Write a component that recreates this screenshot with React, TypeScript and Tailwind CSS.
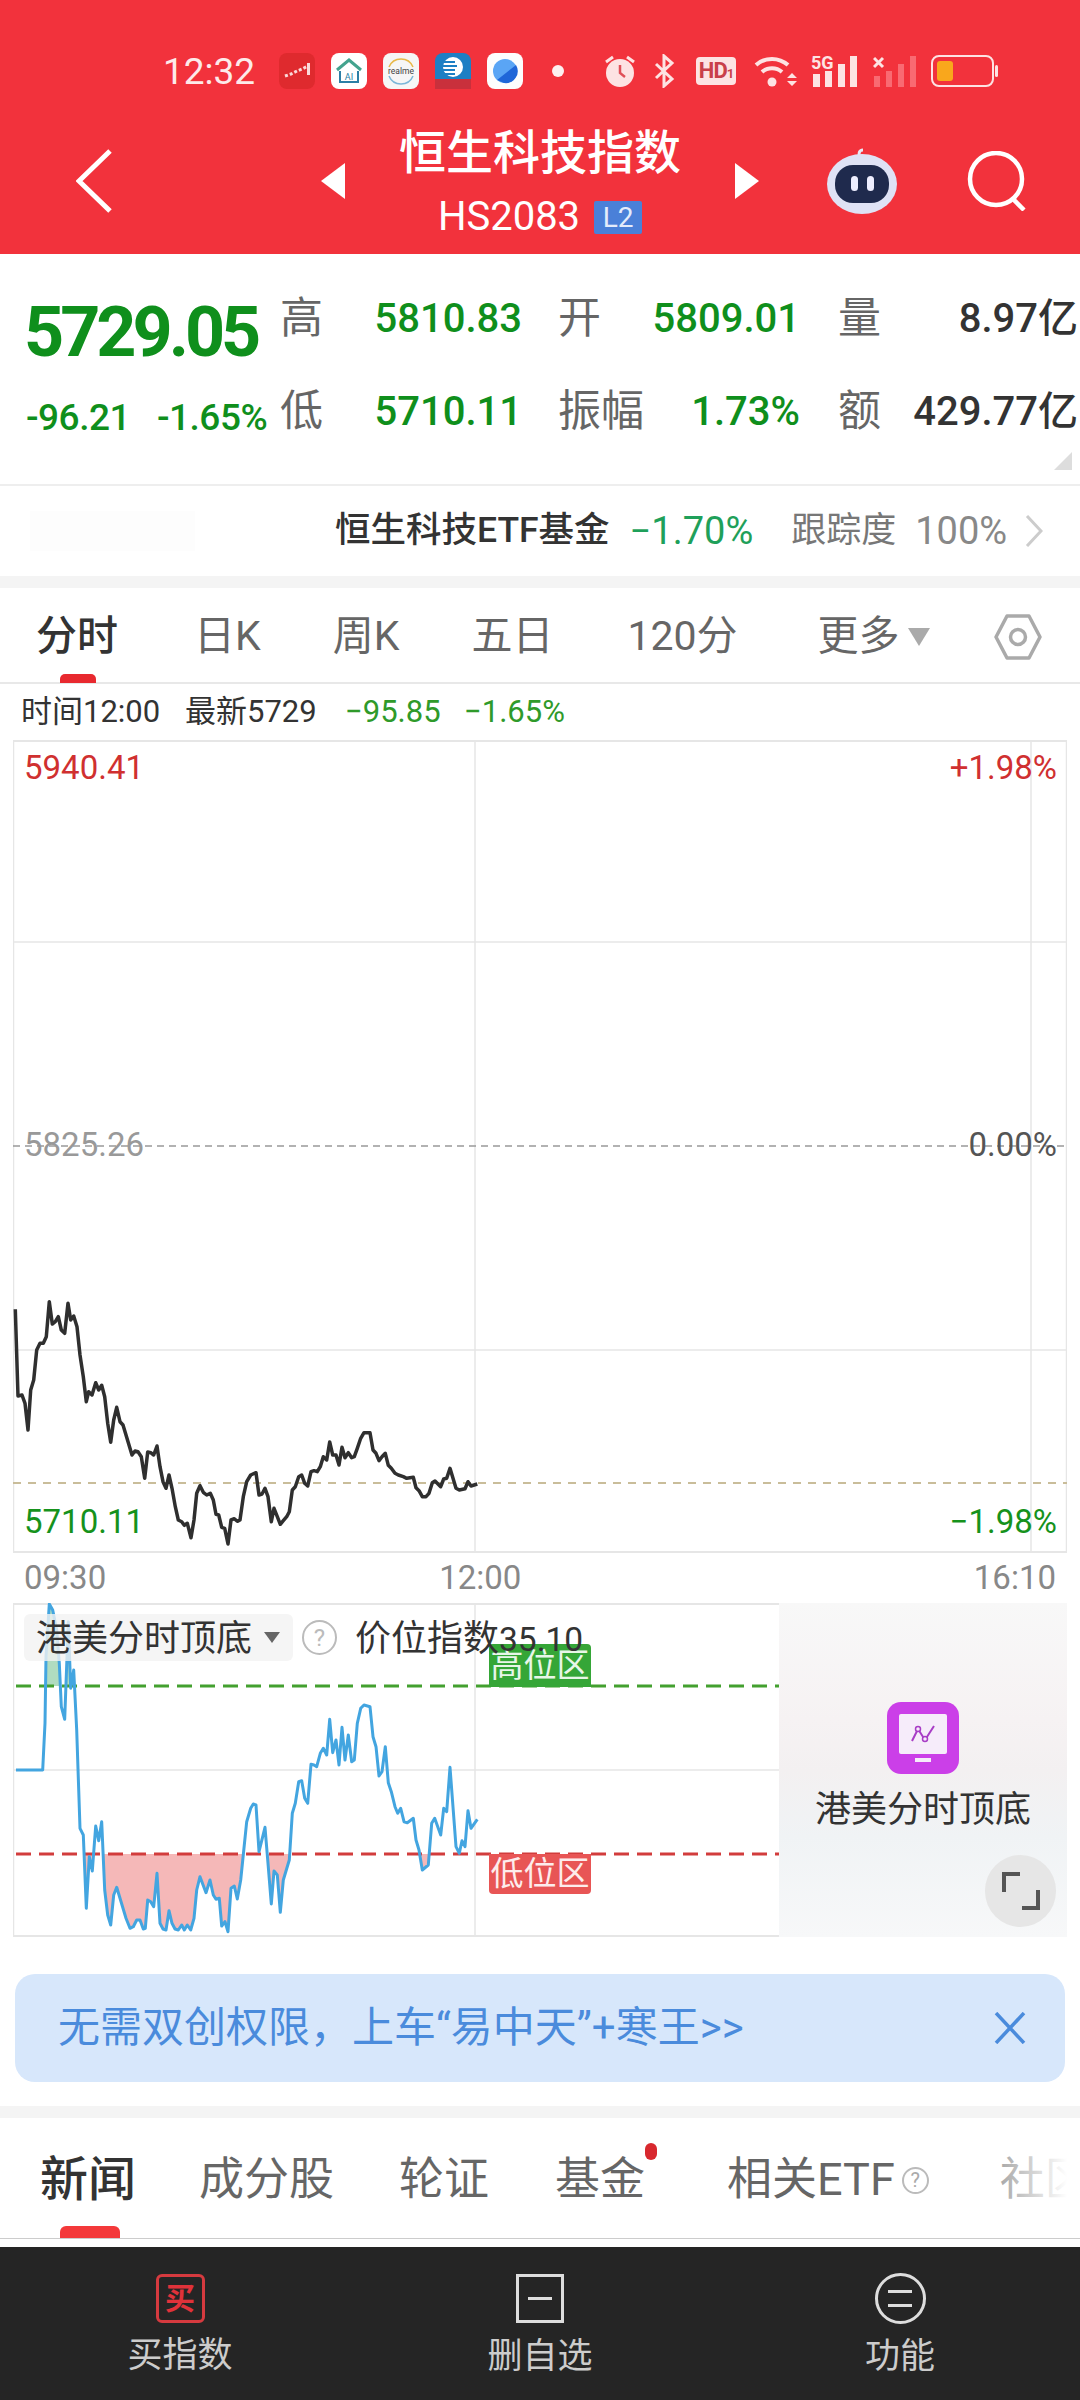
import React from "react";

// traced from the reference: [x, y] in page pixels * 3, offset by the crop origin
const priceRaw = [46,88,54,348,66,345,75,370,84,450,92,330,101,300,110,210,120,190,130,190,139,170,148,65,157,132,166,125,175,110,184,150,194,160,204,70,212,120,221,108,231,140,240,225,250,290,259,365,266,335,276,345,287,308,296,330,305,316,314,350,323,430,332,487,341,420,350,382,360,425,369,435,378,465,396,525,405,513,414,515,424,530,434,595,443,516,452,518,461,525,471,498,480,560,489,605,498,625,507,585,516,625,526,680,535,720,545,725,553,736,562,730,573,773,582,720,590,640,600,617,610,637,620,645,631,640,640,660,648,703,656,705,665,742,674,745,684,792,693,720,703,716,712,724,720,720,730,650,740,605,752,585,768,578,777,645,786,642,795,625,804,650,814,725,822,685,832,710,841,733,850,722,860,710,868,695,877,630,886,620,896,590,905,585,914,610,923,618,933,575,942,572,952,575,961,560,970,530,980,540,989,486,998,525,1008,525,1017,555,1026,502,1035,533,1045,518,1055,533,1063,530,1072,505,1082,475,1092,458,1110,458,1119,510,1128,520,1137,542,1146,530,1156,520,1165,556,1174,565,1185,580,1195,585,1210,590,1220,595,1240,592,1248,623,1257,632,1267,650,1278,650,1287,640,1297,608,1305,603,1322,620,1331,597,1340,595,1350,565,1368,625,1378,630,1395,626,1404,605,1413,618,1432,612];

const indexRaw = [48,540,128,540,135,400,138,200,148,42,158,60,170,120,178,220,184,350,194,388,205,95,212,295,221,240,230,420,240,715,250,735,259,955,268,800,277,843,287,708,296,752,305,695,314,900,323,975,332,1005,341,915,350,892,360,925,378,985,390,1015,400,1010,410,990,420,990,430,1017,436,1015,443,930,452,935,461,950,471,850,480,1000,489,1017,498,1020,507,962,516,1000,525,1017,535,1020,545,1005,553,1020,562,1005,572,1020,582,985,590,900,600,860,618,908,630,870,640,915,648,928,658,925,665,1008,675,995,684,1025,693,895,703,888,712,927,722,870,740,695,752,655,760,642,768,645,777,785,795,712,804,820,814,942,822,843,832,855,841,967,850,870,868,810,877,670,886,640,896,575,905,572,914,625,923,640,933,523,942,525,950,530,961,490,970,475,980,495,989,388,998,488,1008,450,1017,525,1026,412,1035,510,1045,435,1055,515,1063,510,1072,400,1082,355,1092,345,1110,350,1119,440,1128,470,1137,558,1146,545,1156,470,1165,578,1174,605,1185,650,1193,670,1202,655,1212,695,1222,698,1240,685,1248,750,1257,780,1267,840,1285,825,1295,700,1304,685,1322,735,1331,655,1340,665,1350,532,1368,770,1378,790,1386,752,1395,770,1404,662,1413,715,1432,688];

const toPoints = (raw: number[], dy: number) => {
  const out: string[] = [];
  for (let i = 0; i < raw.length; i += 2) {
    out.push(`${(raw[i] / 3 - 13).toFixed(1)},${(raw[i + 1] / 3 + dy).toFixed(1)}`);
  }
  return out.join(" ");
};

const pricePoints = toPoints(priceRaw, 1280 - 740);
const indexPoints = toPoints(indexRaw, 1590 - 1603);

const StatusIcons = () => (
  <div className="flex items-center h-[36px] pl-[163px]">
    <span className="text-[37px] leading-none text-[#fdeaea] w-[116px]">12:32</span>
    <svg width="36" height="36" viewBox="0 0 36 36" className="mr-[16px]">
      <rect width="36" height="36" rx="8" fill="#df2a2e" />
      <path d="M6 23l6-2 6-3 5-2 6-3" stroke="#fbd9d9" strokeWidth="3" strokeDasharray="3 2" fill="none" />
      <rect x="28" y="10" width="3" height="12" fill="#fbd9d9" />
    </svg>
    <svg width="36" height="36" viewBox="0 0 36 36" className="mr-[16px]">
      <rect width="36" height="36" rx="8" fill="#fff" />
      <path d="M6 17L18 7l12 10" stroke="#43a38e" strokeWidth="3" fill="none" />
      <path d="M9 18v11h18V18" stroke="#2c7fa6" strokeWidth="2" fill="none" />
      <text x="18" y="27" textAnchor="middle" fontSize="9" fill="#2c7fa6">AI</text>
    </svg>
    <svg width="36" height="36" viewBox="0 0 36 36" className="mr-[16px]">
      <rect width="36" height="36" rx="8" fill="#f6f6f6" />
      <path d="M6 14a13 13 0 0 1 24 0" stroke="#e8b94a" strokeWidth="1.5" fill="none" />
      <path d="M6 23a13 13 0 0 0 24 0" stroke="#7bb6d8" strokeWidth="1.5" fill="none" />
      <text x="18" y="21" textAnchor="middle" fontSize="8.5" fill="#444">realme</text>
    </svg>
    <svg width="36" height="36" viewBox="0 0 36 36" className="mr-[16px]">
      <rect width="36" height="36" rx="8" fill="#1d7fc4" />
      <circle cx="18" cy="14" r="10" fill="#fff" />
      <path d="M8 9h12M8 13h14M8 17h12M10 21h10" stroke="#1d7fc4" strokeWidth="2" />
      <rect y="26" width="36" height="10" fill="#c9303c" />
    </svg>
    <svg width="36" height="36" viewBox="0 0 36 36" className="mr-[29px]">
      <rect width="36" height="36" rx="8" fill="#fdfdfd" />
      <circle cx="18" cy="18" r="12" fill="#5aa5f5" />
      <path d="M10 27L29 12a12 12 0 0 1-12 18z" fill="#1f66d8" />
    </svg>
    <span className="w-[12px] h-[12px] rounded-full bg-[#fdf0f0] mr-[40px]" />
    <svg width="32" height="34" viewBox="0 0 32 34" className="mr-[18px]">
      <circle cx="16" cy="19" r="14" fill="#fde3e3" />
      <path d="M16 11v8l5 4" stroke="#e05058" strokeWidth="2.5" fill="none" />
      <path d="M2 8l7-5M30 8l-7-5" stroke="#fde3e3" strokeWidth="3" />
    </svg>
    <svg width="21" height="34" viewBox="0 0 21 34" className="mr-[21px]">
      <path d="M2 10l16 15-8 7V2l8 7L2 24" stroke="#fde3e3" strokeWidth="3" fill="none" />
    </svg>
    <div className="w-[40px] h-[28px] bg-[#fde3e3] rounded-[4px] text-[#c9404a] text-[22px] leading-[28px] font-bold text-center mr-[18px] tracking-[-1px]">HD<span className="text-[13px]">1</span></div>
    <svg width="44" height="34" viewBox="0 0 44 34" className="mr-[13px]">
      <path d="M2 11a24 24 0 0 1 32 0M8 18a15 15 0 0 1 20 0" stroke="#fde3e3" strokeWidth="4" fill="none" />
      <circle cx="18" cy="28" r="4.5" fill="#fde3e3" />
      <path d="M33 24l5-5 5 5zM33 27l5 5 5-5z" fill="#fde3e3" />
    </svg>
    <svg width="47" height="38" viewBox="0 -4 47 38" className="mr-[15px] -mt-[4px]">
      <text x="0" y="15" fontSize="18" fontWeight="700" fill="#fde3e3">5G</text>
      <rect x="2" y="20" width="7" height="13" fill="#fde3e3" />
      <rect x="14" y="17" width="7" height="16" fill="#fde3e3" />
      <rect x="27" y="10" width="7" height="23" fill="#fde3e3" />
      <rect x="39" y="2" width="7" height="31" fill="#fde3e3" />
    </svg>
    <svg width="43" height="34" viewBox="0 0 43 34" className="mr-[15px]">
      <path d="M1 4l9 9M10 4l-9 9" stroke="#fde3e3" strokeWidth="3" />
      <rect x="1" y="22" width="6" height="11" fill="#f96a72" />
      <rect x="13" y="17" width="6" height="16" fill="#f96a72" />
      <rect x="25" y="10" width="6" height="23" fill="#f96a72" />
      <rect x="37" y="2" width="6" height="31" fill="#f96a72" />
    </svg>
    <svg width="68" height="32" viewBox="0 0 68 32">
      <rect x="1" y="1" width="61" height="30" rx="7" stroke="#fde3e3" strokeWidth="2" fill="none" />
      <rect x="6" y="6" width="16" height="20" rx="3" fill="#f9a71c" />
      <rect x="64" y="10" width="3" height="12" rx="1.5" fill="#fde3e3" />
    </svg>
  </div>
);

const Header = () => (
  <div className="bg-[#f2323c] h-[254px] pt-[53px]">
    <StatusIcons />
    <div className="flex items-center h-[112px] mt-[36px] text-white">
      <svg width="36" height="64" viewBox="0 0 36 64" className="ml-[76px] mr-[209px]">
        <path d="M34 2L3 32l31 30" stroke="#fff" strokeWidth="5" fill="none" />
      </svg>
      <div className="w-0 h-0 border-y-[18px] border-y-transparent border-r-[24px] border-r-white" />
      <div className="w-[390px] h-[112px] flex flex-col items-center">
        <div className="text-[47px] leading-[56px] font-medium">恒生科技指数</div>
        <div className="flex items-center h-[40px] mt-[16px] gap-[14px]">
          <span className="text-[40px] leading-none">HS2083</span>
          <span className="w-[48px] h-[33px] bg-[#4a80d8] text-[#e4ecfb] text-[28px] leading-[33px] text-center rounded-[2px]">L2</span>
        </div>
      </div>
      <div className="w-0 h-0 border-y-[18px] border-y-transparent border-l-[24px] border-l-white" />
      <svg width="72" height="66" viewBox="0 0 72 66" className="ml-[67px] mr-[69px]">
        <path d="M34 10c-2-4-1-8 3-8" stroke="#e8e8f5" strokeWidth="3" fill="none" />
        <ellipse cx="36" cy="36" rx="35" ry="30" fill="#dfe2f5" />
        <rect x="9" y="17" width="54" height="38" rx="18" fill="#1f2a4d" />
        <rect x="25" y="28" width="7" height="15" rx="3.5" fill="#eef" />
        <rect x="41" y="28" width="7" height="15" rx="3.5" fill="#eef" />
      </svg>
      <svg width="60" height="60" viewBox="0 0 60 60">
        <circle cx="29" cy="28" r="26" stroke="#fff" strokeWidth="4.5" fill="none" />
        <path d="M45 47l12 12" stroke="#fff" strokeWidth="4.5" />
      </svg>
    </div>
  </div>
);

const Pair = ({ label, top, bottom, widthCls, topCls = "text-[#0f8f1c]", bottomCls = "text-[#0f8f1c]" }: { label: [string, string]; top: string; bottom: string; widthCls: string; topCls?: string; bottomCls?: string }) => (
  <div className={`${widthCls} flex flex-col`}>
    <div className="flex justify-between items-center h-[93px]">
      <span className="text-[43px] text-[#666] leading-none">{label[0]}</span>
      <span className={`text-[40px] leading-none font-medium ${topCls}`}>{top}</span>
    </div>
    <div className="flex justify-between items-center h-[93px]">
      <span className="text-[43px] text-[#666] leading-none">{label[1]}</span>
      <span className={`text-[40px] leading-none font-medium ${bottomCls}`}>{bottom}</span>
    </div>
  </div>
);

const Quote = () => (
  <div className="relative h-[232px] flex pt-[18px] border-b-2 border-[#eee]">
    <div className="w-[280px] pl-[24px] flex flex-col text-[#0f8f1c]">
      <div className="h-[93px] pt-[26px] flex items-center text-[70px] font-bold leading-none tracking-[-4px]">5729.05</div>
      <div className="h-[93px] pt-[11px] pl-[2px] flex items-center text-[37px] font-medium leading-none tracking-[-0.5px] gap-[27px]">
        <span>-96.21</span>
        <span>-1.65%</span>
      </div>
    </div>
    <Pair label={["高", "低"]} top="5810.83" bottom="5710.11" widthCls="w-[242px] mr-[36px]" />
    <Pair label={["开", "振幅"]} top="5809.01" bottom="1.73%" widthCls="w-[242px] mr-[38px]" />
    <Pair label={["量", "额"]} top="8.97亿" bottom="429.77亿" widthCls="w-[240px]" topCls="text-[#333]" bottomCls="text-[#333]" />
    <div className="absolute right-[8px] bottom-[14px] w-0 h-0 border-b-[18px] border-b-[#ddd] border-l-[18px] border-l-transparent" />
  </div>
);

const EtfRow = () => (
  <div className="h-[90px] flex items-center pl-[30px]">
    <div className="w-[165px] h-[40px] bg-[#fdfdfd] mr-[140px]" />
    <span className="text-[35.5px] text-[#333] font-medium mr-[20px] whitespace-nowrap">恒生科技ETF基金</span>
    <span className="text-[38px] text-[#1fa05a] mr-[38px]">−1.70%</span>
    <span className="text-[35px] text-[#777] mr-[19px]">跟踪度</span>
    <span className="text-[38px] text-[#888] mr-[18px]">100%</span>
    <svg width="18" height="32" viewBox="0 0 18 32">
      <path d="M2 1l14 15L2 31" stroke="#ccc" strokeWidth="3" fill="none" />
    </svg>
  </div>
);

const KTabs = () => (
  <div className="relative h-[96px] border-b-2 border-[#e8e8e8] flex items-center text-[41px] text-[#666] pt-[4px]">
    <span className="ml-[36px] text-[#333] font-medium">分时</span>
    <span className="ml-[76px]">日K</span>
    <span className="ml-[72px]">周K</span>
    <span className="ml-[72px]">五日</span>
    <span className="ml-[74px]">120分</span>
    <span className="ml-[80px]">更多</span>
    <div className="ml-[8px] w-0 h-0 border-t-[18px] border-t-[#aaa] border-x-[11px] border-x-transparent" />
    <svg width="48" height="46" viewBox="0 0 48 46" className="ml-[64px]">
      <path d="M13 2h22l11 21-11 21H13L2 23z" stroke="#aaa" strokeWidth="3.5" fill="none" strokeLinejoin="round" />
      <circle cx="24" cy="23" r="7.5" stroke="#aaa" strokeWidth="3.5" fill="none" />
    </svg>
    <div className="absolute left-[60px] -bottom-[1px] w-[36px] h-[9px] bg-[#e8292f] rounded-t-[5px]" />
  </div>
);

const InfoRow = () => (
  <div className="h-[56px] flex items-center pl-[21px] text-[31px] text-[#333]">
    <span className="w-[164px]">时间12:00</span>
    <span className="w-[160px]">最新5729</span>
    <span className="w-[119px] text-[#2f9a2a]">−95.85</span>
    <span className="text-[#2f9a2a]">−1.65%</span>
  </div>
);

const PriceChart = () => (
  <div className="relative mx-[13px] h-[813px]">
    <svg width="1054" height="813" viewBox="0 0 1054 813" className="block">
      <g stroke="#e6e6e6" strokeWidth="1.5">
        <line x1="0" y1="1" x2="1054" y2="1" strokeWidth="2" />
        <line x1="0" y1="202" x2="1054" y2="202" />
        <line x1="0" y1="610" x2="1054" y2="610" />
        <line x1="0" y1="812" x2="1054" y2="812" strokeWidth="2" />
        <line x1="0.5" y1="0" x2="0.5" y2="813" />
        <line x1="462" y1="0" x2="462" y2="813" />
        <line x1="1018" y1="0" x2="1018" y2="813" />
        <line x1="1053.5" y1="0" x2="1053.5" y2="813" />
      </g>
      <line x1="0" y1="406" x2="1054" y2="406" stroke="#999" strokeWidth="1.5" strokeDasharray="7 5" />
      <line x1="0" y1="743" x2="1054" y2="743" stroke="#c9bd9a" strokeWidth="2" strokeDasharray="8 7" />
      <polyline points={pricePoints} fill="none" stroke="#2f2f2f" strokeWidth="3.5" strokeLinejoin="round" />
    </svg>
    <span className="absolute left-[11px] top-[8px] text-[33px] leading-[40px] text-[#d03030]">5940.41</span>
    <span className="absolute right-[10px] top-[8px] text-[33px] leading-[40px] text-[#d03030]">+1.98%</span>
    <span className="absolute left-[11px] top-[385px] text-[33px] leading-[40px] text-[#999]">5825.26</span>
    <span className="absolute right-[10px] top-[385px] text-[33px] leading-[40px] text-[#555]">0.00%</span>
    <span className="absolute left-[11px] top-[762px] text-[33px] leading-[40px] text-[#16921c]">5710.11</span>
    <span className="absolute right-[10px] top-[762px] text-[33px] leading-[40px] text-[#16921c]">−1.98%</span>
  </div>
);

const TimeAxis = () => (
  <div className="h-[50px] flex items-center px-[24px] text-[33px] text-[#888]">
    <span>09:30</span>
    <span className="ml-[333px]">12:00</span>
    <span className="ml-auto">16:10</span>
  </div>
);

const IndexChart = () => (
  <div className="relative mx-[13px] h-[334px] flex">
    <svg width="766" height="334" viewBox="0 0 766 334" className="block">
      <defs>
        <clipPath id="below">
          <rect x="0" y="251" width="766" height="90" />
        </clipPath>
        <clipPath id="above">
          <rect x="0" y="0" width="766" height="83" />
        </clipPath>
      </defs>
      <g stroke="#e6e6e6" strokeWidth="1.5">
        <line x1="0" y1="1" x2="766" y2="1" strokeWidth="2" />
        <line x1="0" y1="167" x2="766" y2="167" />
        <line x1="0" y1="333" x2="766" y2="333" strokeWidth="2" />
        <line x1="0.5" y1="0" x2="0.5" y2="334" />
        <line x1="462" y1="0" x2="462" y2="334" />
      </g>
      <polygon points={`${indexPoints} 464,251 3,251`} fill="#f5b8b8" clipPath="url(#below)" />
      <polygon points={`${indexPoints} 464,83 3,83`} fill="#b0dcc0" clipPath="url(#above)" />
      <line x1="3" y1="83" x2="766" y2="83" stroke="#43a02f" strokeWidth="3" strokeDasharray="15 8" />
      <line x1="3" y1="251" x2="766" y2="251" stroke="#d23c3c" strokeWidth="3" strokeDasharray="15 8" />
      <polyline points={indexPoints} fill="none" stroke="#43a5e0" strokeWidth="3" strokeLinejoin="round" />
    </svg>
    <div className="relative flex-1 flex flex-col items-center bg-[linear-gradient(180deg,#f8f8f8_0%,#f6f2f3_35%,#f3f0f1_50%,#f0f3f5_70%,#f7f8f9_100%)] pt-[99px]">
      <div className="w-[72px] h-[72px] rounded-[14px] bg-[#cb3fe8] flex flex-col items-center pt-[12px]">
        <div className="w-[48px] h-[40px] rounded-[2px] bg-[#f6ecfa] flex items-center justify-center">
          <svg width="26" height="20" viewBox="0 0 26 20">
            <path d="M2 17L8 5l7 11 9-14" stroke="#a83dc6" strokeWidth="2" fill="none" />
            <circle cx="8" cy="5" r="2.5" fill="#f6ecfa" stroke="#a83dc6" strokeWidth="1.5" />
            <circle cx="15" cy="15" r="2.5" fill="#f6ecfa" stroke="#a83dc6" strokeWidth="1.5" />
          </svg>
        </div>
        <div className="w-[16px] h-[4px] bg-[#f6ecfa] mt-[4px]" />
      </div>
      <div className="text-[36px] leading-[44px] text-[#333] mt-[14px]">港美分时顶底</div>
      <div className="absolute right-[11px] bottom-[10px] w-[71px] h-[72px] rounded-full bg-[#e6e6e6] flex items-center justify-center">
        <svg width="38" height="38" viewBox="0 0 38 38">
          <path d="M18 2H2v18M20 36h16V18" stroke="#555" strokeWidth="4" fill="none" />
        </svg>
      </div>
    </div>
    <div className="absolute left-[11px] top-[11px] w-[269px] h-[47px] rounded-[6px] bg-[#f2f2f2]/80 flex items-center pl-[12px] pt-[3px]">
      <span className="text-[36px] leading-none text-[#333]">港美分时顶底</span>
      <div className="ml-[12px] -mt-[3px] w-0 h-0 border-t-[11px] border-t-[#666] border-x-[8px] border-x-transparent" />
    </div>
    <div className="absolute left-[289px] top-[17px] w-[35px] h-[35px] rounded-full border-2 border-[#bbb] flex items-center justify-center text-[24px] leading-none text-[#bbb]">?</div>
    <div className="absolute left-[476px] top-[41px] w-[102px] h-[43px] bg-[#35a637] rounded-t-[4px] text-[33px] leading-[43px] text-center text-[#e8f6e8]">高位区</div>
    <span className="absolute left-[342px] top-[14px] text-[36px] leading-[44px] text-[#333] whitespace-nowrap">价位指数<span className="text-[33.5px]">35.10</span></span>
    <div className="absolute left-[476px] top-[251px] w-[102px] h-[40px] bg-[#e85555] rounded-b-[4px] text-[33px] leading-[40px] text-center text-[#fdecec]">低位区</div>
  </div>
);

const Banner = () => (
  <div className="mx-[15px] mt-[37px] h-[108px] rounded-[20px] bg-[#d7e7fb] flex items-center justify-between pl-[43px] pr-[39px]">
    <span className="text-[42px] leading-none text-[#4a8bdc] whitespace-nowrap">无需双创权限，上车“易中天”+寒王&gt;&gt;</span>
    <svg width="32" height="32" viewBox="0 0 32 32">
      <path d="M2 1l28 30M30 1L2 31" stroke="#4a8bdc" strokeWidth="3.5" />
    </svg>
  </div>
);

const NewsTabs = () => (
  <div className="relative h-[133px] mt-[24px] border-t-[12px] border-[#f4f4f4] border-b border-b-[#ccc] overflow-hidden">
    <div className="h-[120px] flex items-center text-[45px] text-[#666] whitespace-nowrap pt-[4px]">
      <span className="ml-[40px] text-[48px] text-[#333] font-medium">新闻</span>
      <span className="ml-[63px]">成分股</span>
      <span className="ml-[65px]">轮证</span>
      <span className="ml-[66px]">基金</span>
      <span className="ml-[82px]">相关ETF</span>
      <span className="ml-[7px] shrink-0 w-[27px] h-[27px] rounded-full border-2 border-[#bbb] text-[#aaa] text-[20px] leading-[23px] text-center">?</span>
      <span className="ml-[71px]">社区</span>
    </div>
    <div className="absolute left-[645px] top-[25px] w-[12px] h-[17px] rounded-full bg-[#d8282e]" />
    <div className="absolute right-0 top-0 w-[85px] h-[119px] bg-[linear-gradient(90deg,rgba(255,255,255,0.4),#fff_85%)]" />
    <div className="absolute left-[60px] bottom-0 w-[60px] h-[12px] rounded-t-[6px] bg-[#f4393a]" />
  </div>
);

const BottomBar = () => (
  <div className="h-[153px] mt-[8px] bg-[#252525] grid grid-cols-3 text-[35px] text-[#ccc]">
    <div className="flex flex-col items-center pt-[27px]">
      <div className="w-[49px] h-[49px] rounded-[6px] border-[3px] border-[#d63a3f] flex items-center justify-center text-[30px] leading-none font-bold text-[#e0323a]">买</div>
      <span className="leading-[44px] mt-[11px]">买指数</span>
    </div>
    <div className="flex flex-col items-center pt-[27px]">
      <div className="w-[48px] h-[49px] border-[3px] border-[#ddd] flex items-center justify-center">
        <div className="w-[24px] h-[3px] bg-[#ddd]" />
      </div>
      <span className="leading-[44px] mt-[12px]">删自选</span>
    </div>
    <div className="flex flex-col items-center pt-[26px]">
      <div className="w-[51px] h-[51px] rounded-full border-[3px] border-[#ddd] flex flex-col items-center justify-center gap-[11px]">
        <div className="w-[24px] h-[3px] bg-[#ddd]" />
        <div className="w-[24px] h-[3px] bg-[#ddd]" />
      </div>
      <span className="leading-[44px] mt-[11px]">功能</span>
    </div>
  </div>
);

export default function App() {
  return (
    <div className="w-[1080px] h-[2400px] overflow-hidden bg-white font-[Roboto,'Noto_Sans_CJK_SC',sans-serif]">
      <Header />
      <Quote />
      <EtfRow />
      <div className="h-[12px] bg-[#f4f4f4]" />
      <KTabs />
      <InfoRow />
      <PriceChart />
      <TimeAxis />
      <IndexChart />
      <Banner />
      <NewsTabs />
      <BottomBar />
    </div>
  );
}
